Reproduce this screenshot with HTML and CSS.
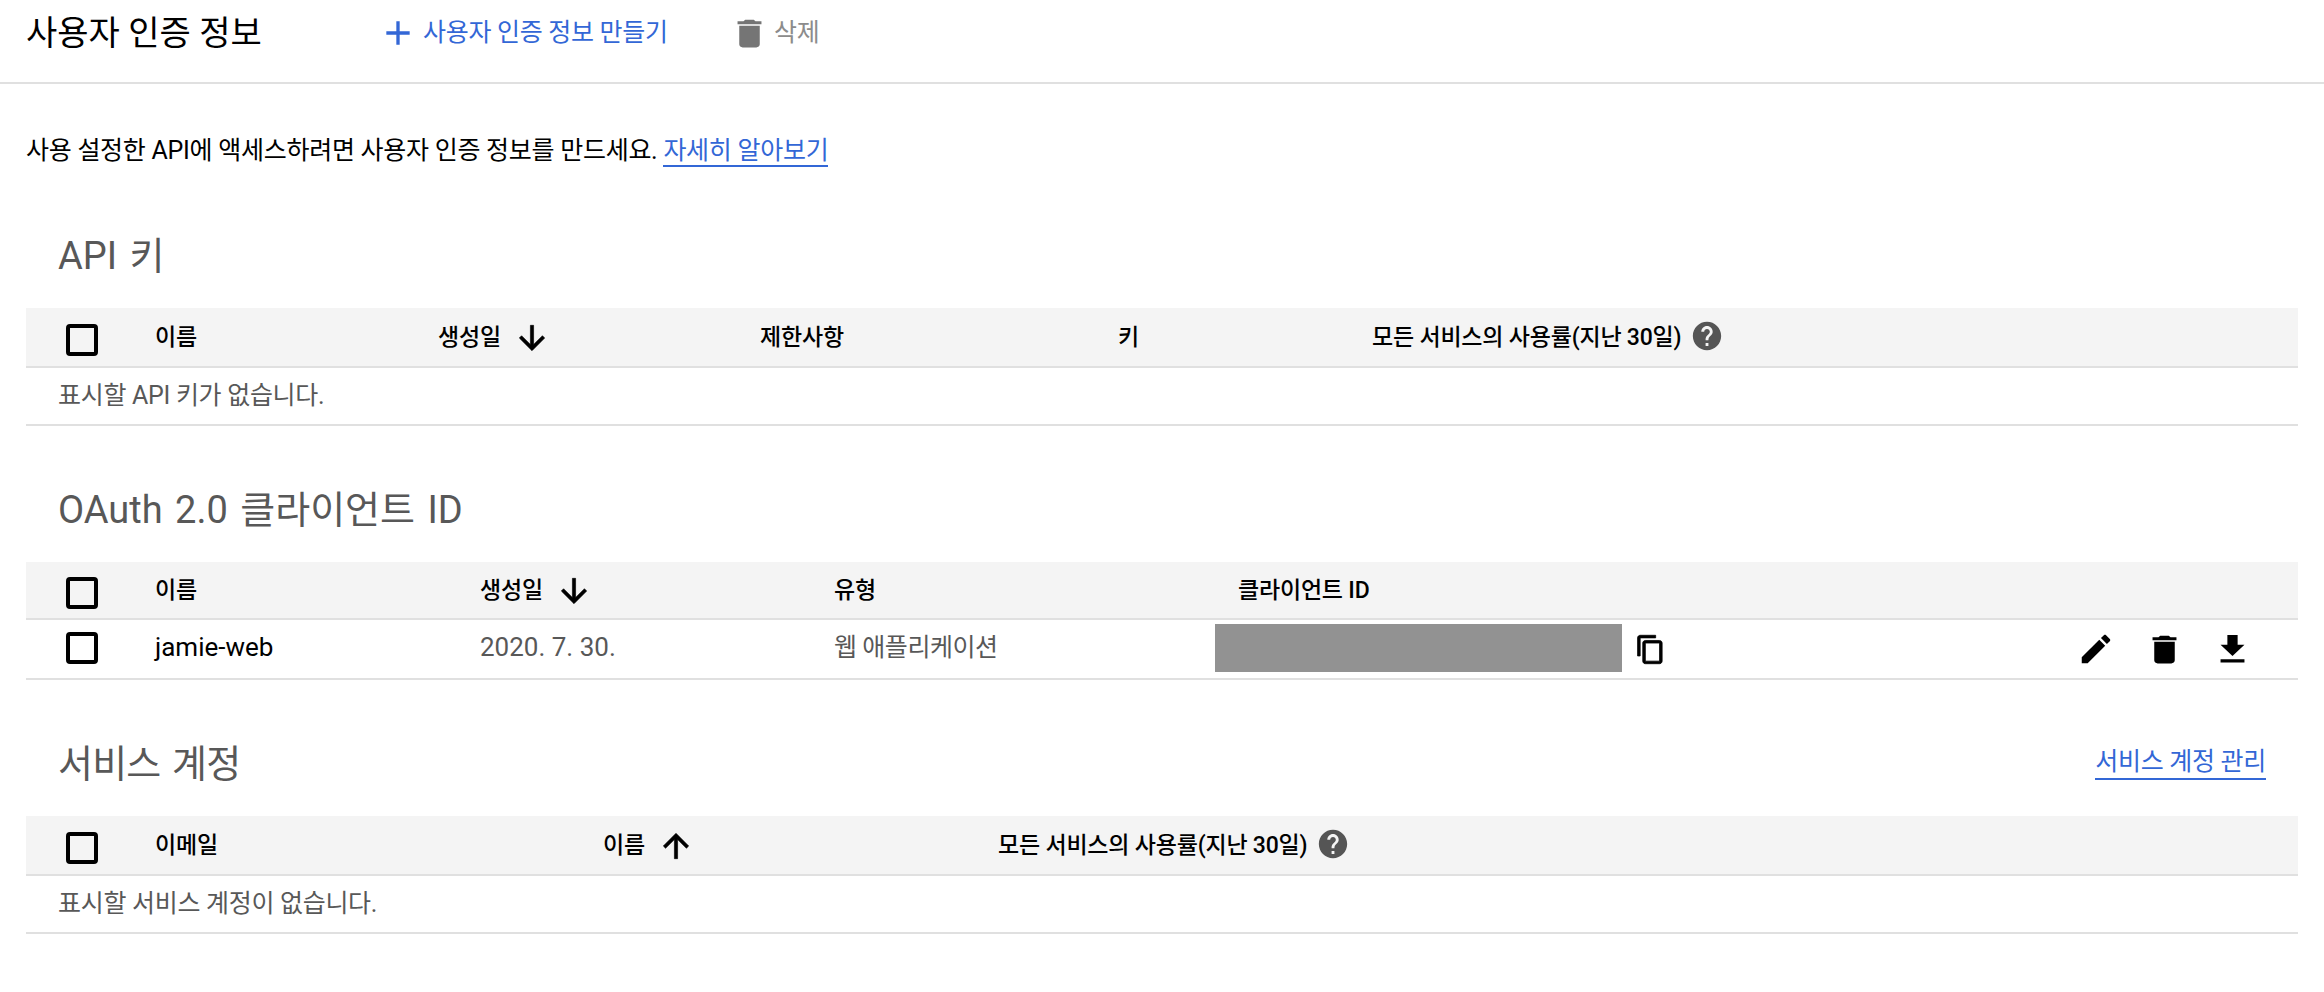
FILE: index.html
```html
<!DOCTYPE html>
<html lang="ko">
<head>
<meta charset="utf-8">
<title>사용자 인증 정보</title>
<link rel="stylesheet" href="styles.css">
</head>
<body>
<svg class="defs" width="0" height="0" aria-hidden="true">
  <symbol id="i-add" viewBox="0 0 24 24"><path d="M19 13h-6v6h-2v-6H5v-2h6V5h2v6h6v2z"/></symbol>
  <symbol id="i-delete" viewBox="0 0 24 24" preserveAspectRatio="none"><path d="M6 19c0 1.1.9 2 2 2h8c1.1 0 2-.9 2-2V7H6v12zM19 4h-3.5l-1-1h-5l-1 1H5v2h14V4z"/></symbol>
  <symbol id="i-down" viewBox="0 0 24 24"><path d="M20 12l-1.41-1.41L13 16.17V4h-2v12.17l-5.58-5.59L4 12l8 8 8-8z"/></symbol>
  <symbol id="i-up" viewBox="0 0 24 24"><path d="M4 12l1.41 1.41L11 7.83V20h2V7.83l5.58 5.59L20 12l-8-8-8 8z"/></symbol>
  <symbol id="i-help" viewBox="0 0 24 24"><path d="M12 2C6.48 2 2 6.48 2 12s4.48 10 10 10 10-4.48 10-10S17.52 2 12 2zm1 17h-2v-2h2v2zm2.07-7.75l-.9.92C13.45 12.9 13 13.5 13 15h-2v-.5c0-1.1.45-2.1 1.17-2.83l1.24-1.26c.37-.36.59-.86.59-1.41 0-1.1-.9-2-2-2s-2 .9-2 2H8c0-2.21 1.79-4 4-4s4 1.79 4 4c0 .88-.36 1.68-.93 2.25z"/></symbol>
  <symbol id="i-copy" viewBox="0 0 24 24"><path d="M16 1H4c-1.1 0-2 .9-2 2v14h2V3h12V1zm3 4H8c-1.1 0-2 .9-2 2v14c0 1.1.9 2 2 2h11c1.1 0 2-.9 2-2V7c0-1.1-.9-2-2-2zm0 16H8V7h11v14z"/></symbol>
  <symbol id="i-edit" viewBox="0 0 24 24"><path d="M3 17.25V21h3.75L17.81 9.94l-3.75-3.75L3 17.25zM20.71 7.04c.39-.39.39-1.02 0-1.41l-2.34-2.34c-.39-.39-1.02-.39-1.41 0l-1.83 1.83 3.75 3.75 1.83-1.83z"/></symbol>
  <symbol id="i-get" viewBox="0 0 24 24" preserveAspectRatio="none"><path d="M19 9h-4V3H9v6H5l7 7 7-7zM5 18v2h14v-2H5z"/></symbol>
</svg>

<header class="toolbar">
  <h1 class="page-title">사용자 인증 정보</h1>
  <a class="tool tool-create"><svg class="icon icon-add"><use href="#i-add"/></svg><span>사용자 인증 정보 만들기</span></a>
  <a class="tool tool-delete"><svg class="icon icon-trash"><use href="#i-delete"/></svg><span>삭제</span></a>
</header>

<main class="content">
  <p class="intro">사용 설정한 API에 액세스하려면 사용자 인증 정보를 만드세요. <a class="link">자세히 알아보기</a></p>

  <section>
    <div class="section-head"><h2>API 키</h2></div>
    <div class="row head cols-api tall">
      <span class="checkbox"></span>
      <span>이름</span>
      <span class="sort">생성일<svg class="icon icon-sort"><use href="#i-down"/></svg></span>
      <span>제한사항</span>
      <span>키</span>
      <span class="sort">모든 서비스의 사용률(지난 30일)<svg class="icon icon-help"><use href="#i-help"/></svg></span>
    </div>
    <div class="empty">표시할 API 키가 없습니다.</div>
  </section>

  <section>
    <div class="section-head"><h2>OAuth 2.0 클라이언트 ID</h2></div>
    <div class="row head cols-oauth">
      <span class="checkbox"></span>
      <span>이름</span>
      <span class="sort">생성일<svg class="icon icon-sort"><use href="#i-down"/></svg></span>
      <span>유형</span>
      <span class="client-head">클라이언트 ID</span>
    </div>
    <div class="row body cols-oauth">
      <span class="checkbox"></span>
      <span class="latin name">jamie-web</span>
      <span class="latin">2020. 7. 30.</span>
      <span class="korean">웹 애플리케이션</span>
      <span class="client-cell">
        <span class="redacted"></span>
        <svg class="icon icon-copy"><use href="#i-copy"/></svg>
        <span class="actions">
          <span class="action"><svg class="icon icon-edit"><use href="#i-edit"/></svg></span>
          <span class="action"><svg class="icon icon-bin"><use href="#i-delete"/></svg></span>
          <span class="action"><svg class="icon icon-get"><use href="#i-get"/></svg></span>
        </span>
      </span>
    </div>
  </section>

  <section>
    <div class="section-head split"><h2 class="tight">서비스 계정</h2><a class="link">서비스 계정 관리</a></div>
    <div class="row head cols-service tall">
      <span class="checkbox"></span>
      <span>이메일</span>
      <span class="sort">이름<svg class="icon icon-sort"><use href="#i-up"/></svg></span>
      <span class="sort">모든 서비스의 사용률(지난 30일)<svg class="icon icon-help"><use href="#i-help"/></svg></span>
    </div>
    <div class="empty">표시할 서비스 계정이 없습니다.</div>
  </section>
</main>
</body>
</html>
```

FILE: styles.css
```css
* { box-sizing: border-box; }

body {
  margin: 0;
  background: #fff;
  color: #000;
  font-family: Roboto, "Noto Sans CJK KR", sans-serif;
  font-size: 25px;
  letter-spacing: -0.3px;
}

.defs { position: absolute; }

.icon { display: block; fill: currentColor; flex: none; }

.toolbar {
  display: flex;
  align-items: flex-start;
  height: 84px;
  padding-left: 26px;
  border-bottom: 2px solid #e0e0e0;
}

.page-title {
  margin: 8px 0 0;
  width: 360px;
  font-size: 34px;
  line-height: 50px;
  font-weight: 400;
  letter-spacing: 0;
}

.tool {
  display: flex;
  align-items: center;
  height: 60px;
}

.tool-create { color: #3367d6; width: 349px; }
.tool-delete { color: #8c8c8c; }
.icon-add { width: 40px; height: 40px; margin: 6px 5px 0 -8px; }
.icon-trash { width: 41px; height: 37px; margin: 6px 4px 0 -6px; color: #757575; }

.content { padding: 0 26px; }

.intro {
  margin: 0;
  height: 88px;
  padding-top: 49px;
  line-height: 36px;
  letter-spacing: -0.27px;
}

.link {
  color: #3367d6;
  border-bottom: 2px solid #3367d6;
}

.section-head {
  height: 136px;
  padding: 60px 32px 0;
}
.section-head.split {
  display: flex;
  justify-content: space-between;
  align-items: flex-start;
}
.section-head .link { line-height: 28px; margin-top: 8px; padding-bottom: 2px; }

h2 {
  margin: 0;
  font-size: 38px;
  line-height: 48px;
  font-weight: 400;
  color: #585858;
  letter-spacing: 0;
  word-spacing: 3px;
}
h2.tight { letter-spacing: -0.8px; }

.row {
  display: grid;
  align-items: center;
  padding-left: 40px;
  border-bottom: 2px solid #e0e0e0;
}

.head {
  height: 58px;
  background: #f4f4f4;
  font-size: 23px;
  font-weight: 500;
  letter-spacing: -0.2px;
}
.head.tall { height: 60px; }
.head > span { padding-bottom: 4px; }
.head > .checkbox { padding: 0; margin-top: 5px; }

.body { height: 60px; color: #585858; }
.body > .checkbox { margin-bottom: 2px; }

.latin { font-size: 26px; letter-spacing: 0; padding-bottom: 4px; }
.korean { padding-bottom: 8px; letter-spacing: -0.45px; }

.cols-api { grid-template-columns: 89px 283px 322px 358px 254px 1fr; }
.cols-oauth { grid-template-columns: 89px 325px 354px 381px 1fr; }
.cols-service { grid-template-columns: 89px 448px 395px 1fr; }

.checkbox {
  display: block;
  width: 32px;
  height: 32px;
  border: 4px solid #000;
  border-radius: 4px;
}

.sort { display: flex; align-items: center; }
.icon-sort { width: 38px; height: 38px; margin-left: 12px; margin-top: 5px; stroke: currentColor; stroke-width: 0.4; }
.icon-help { width: 34px; height: 34px; margin-left: 9px; margin-top: 2px; color: #555; }

.client-head { padding-left: 23px; }

.client-cell {
  display: flex;
  align-items: center;
  color: #000;
}

.redacted {
  width: 407px;
  height: 48px;
  background: #929292;
  margin-bottom: 2px;
}

.icon-copy { width: 31px; height: 31px; margin-left: 13px; stroke: currentColor; stroke-width: 0.6; }

.actions { display: flex; margin-left: auto; margin-right: 32px; }
.action { display: flex; justify-content: center; align-items: center; width: 68px; }

.icon-edit { width: 38px; height: 38px; }
.icon-bin { width: 41px; height: 37px; }
.icon-get { width: 41px; height: 39px; }

.name { color: #000; }

.empty {
  height: 58px;
  padding-left: 32px;
  line-height: 56px;
  color: #585858;
  border-bottom: 2px solid #e0e0e0;
}
```
